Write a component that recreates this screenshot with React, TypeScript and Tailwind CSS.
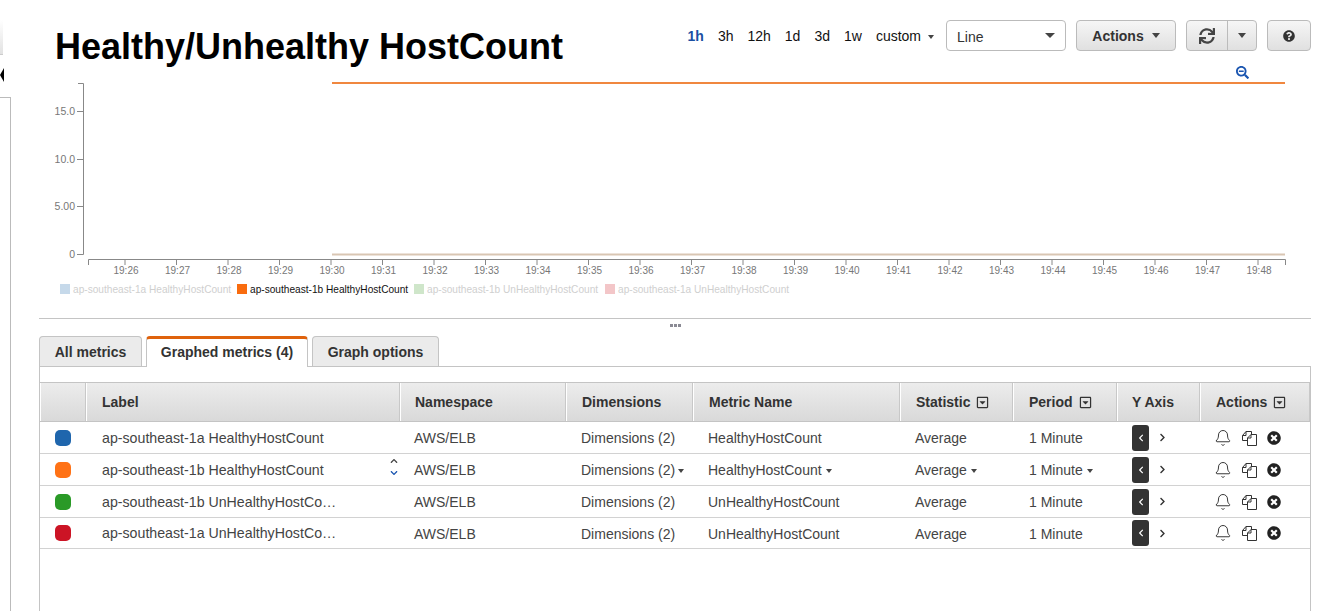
import React from 'react';
import { Bell } from 'lucide-react';
import { FaSync, FaQuestionCircle, FaSearchMinus, FaTimesCircle, FaRegCaretSquareDown, FaChevronLeft, FaChevronRight, FaChevronUp, FaChevronDown } from 'react-icons/fa';

const ranges = ['3h', '12h', '1d', '3d', '1w'];
const minutes = Array.from({ length: 23 }, (_, i) => 26 + i);
const yTicks = [
  { label: '15.0', y: 111 },
  { label: '10.0', y: 159 },
  { label: '5.00', y: 206 },
  { label: '0', y: 254 },
];
const legend = [
  { x: 60, color: '#c6d9ea', text: 'ap-southeast-1a HealthyHostCount', fill: '#cfcfcf' },
  { x: 237, color: '#f96c0f', text: 'ap-southeast-1b HealthyHostCount', fill: '#111111' },
  { x: 414, color: '#cfe6ca', text: 'ap-southeast-1b UnHealthyHostCount', fill: '#cfcfcf' },
  { x: 605, color: '#f3c6c8', text: 'ap-southeast-1a UnHealthyHostCount', fill: '#cfcfcf' },
];
const rows = [
  { color: 'bg-[#1f66ad]', label: 'ap-southeast-1a HealthyHostCount', metric: 'HealthyHostCount', h: 'h-[32px]' },
  { color: 'bg-[#ff7216]', label: 'ap-southeast-1b HealthyHostCount', metric: 'HealthyHostCount', h: 'h-[32px]', active: true },
  { color: 'bg-[#2a9a27]', label: 'ap-southeast-1b UnHealthyHostCo…', metric: 'UnHealthyHostCount', h: 'h-[32px]' },
  { color: 'bg-[#cc1425]', label: 'ap-southeast-1a UnHealthyHostCo…', metric: 'UnHealthyHostCount', h: 'h-[31px]' },
];
const gridCols = 'grid grid-cols-[46px_314px_166px_127px_207px_113px_104px_83px_1fr]';

const Caret: React.FC<{ className?: string }> = ({ className = '' }) => (
  <span className={`inline-block w-0 h-0 border-x-[3.5px] border-x-transparent border-t-[4px] border-t-[#444] ${className}`} />
);

const CopyIcon: React.FC = () => (
  <svg width="17" height="16" viewBox="0 0 17 16" fill="none" stroke="#333" strokeWidth="1">
    <path d="M6.5 10.5H1.5V5.5L5 1.5H10.5V4.5" />
    <path d="M5 1.5V5.5H1.5" />
    <path d="M6.5 15.5V8L10 4.5H15.5V15.5Z" fill="#fff" />
    <path d="M10 4.5V8H6.5" />
  </svg>
);

const HeaderCell: React.FC<{ label?: string; menu?: boolean; pad?: string }> = ({ label, menu, pad = 'pl-[15px]' }) => (
  <div className={`flex items-center gap-[6px] border-r border-r-[#c8c8c8] border-l border-l-white ${pad} font-bold text-[#333]`}>
    {label}
    {menu && <FaRegCaretSquareDown className="text-[13px] text-[#333]" />}
  </div>
);

const Chart: React.FC = () => (
  <svg className="block w-[1272px] h-[240px]" viewBox="39 60 1272 240" fontFamily="'Liberation Sans', Arial, sans-serif">
    <path d="M78 83.5H83.5V254.5H77" fill="none" stroke="#888" />
    {yTicks.map((t) => (
      <g key={t.label}>
        <line x1="77" x2="83" y1={t.y + 0.5} y2={t.y + 0.5} stroke="#888" />
        <text x="75" y={t.y + 3.5} textAnchor="end" fontSize="10.5" fill="#777">{t.label}</text>
      </g>
    ))}
    <path d="M88.5 265V259.5H1285.5V265" fill="none" stroke="#888" />
    {minutes.map((m, i) => {
      const x = 125 + i * 51.5;
      return (
        <g key={m}>
          <line x1={x} x2={x} y1="259" y2="265" stroke="#888" />
          <text x={x + 1} y="274" textAnchor="middle" fontSize="10" fill="#777">19:{m}</text>
        </g>
      );
    })}
    <line x1="332" x2="1285" y1="83" y2="83" stroke="#f0873f" strokeWidth="2" />
    <line x1="332" x2="1285" y1="254.5" y2="254.5" stroke="#d9c6b3" strokeWidth="2" />
    {legend.map((l) => (
      <g key={l.x}>
        <rect x={l.x} y="284" width="10" height="10" fill={l.color} />
        <text x={l.x + 13} y="293" fontSize="10.15" fill={l.fill}>{l.text}</text>
      </g>
    ))}
  </svg>
);

const App: React.FC = () => (
  <div className="flex w-[1325px] h-[611px] overflow-hidden bg-white text-[14px] text-[#444] font-['Liberation_Sans',Arial,sans-serif]">
    {/* sidebar edge */}
    <div className="w-[11px] shrink-0 mr-[28px] flex flex-col">
      <div className="mt-[20px] w-[3px] h-[35px] bg-gradient-to-b from-white to-[#e2e2e2] border-b border-[#ccc]" />
      <div className="mt-[13px] h-[14px] w-0 border-y-[7px] border-y-transparent border-r-[4px] border-r-black" />
      <div className="mt-[15px] flex-1 border-t border-r border-[#bbb]" />
    </div>

    <div className="flex-1 flex flex-col mr-[14px] relative">
      {/* title and toolbar */}
      <div className="h-[60px] flex items-start">
        <h1 className="ml-[16px] mt-[25px] text-[36px] leading-[44px] font-bold text-black">Healthy/Unhealthy HostCount</h1>
        <div className="ml-auto mt-[20px] flex items-center h-[31px]">
          <div className="flex items-center gap-[14px] pt-[2px] text-[#111]">
            <span className="font-bold text-[#1a4fa3]">1h</span>
            {ranges.map((r) => <span key={r}>{r}</span>)}
            <span className="flex items-center gap-[6px]">custom <Caret className="ml-[1px] border-t-[#333]" /></span>
          </div>
          <div className="ml-[12px] w-[120px] h-[31px] border border-[#bbb] rounded-[4px] flex items-center justify-between pl-[10px] pr-[10px] text-[#333]">
            <span className="pt-[3px]">Line</span> <Caret className="border-x-[5px] border-t-[5px] border-t-[#333]" />
          </div>
          <button className="ml-[10px] w-[100px] h-[31px] border border-[#bbb] rounded-[4px] bg-gradient-to-b from-[#f6f6f6] to-[#e0e0e0] font-bold text-[#333] flex items-center justify-center gap-[8px]">
            <span className="pt-[1px]">Actions</span> <Caret className="border-x-[4px] border-t-[5px]" />
          </button>
          <div className="ml-[10px] w-[71px] h-[31px] border border-[#bbb] rounded-[4px] bg-gradient-to-b from-[#f6f6f6] to-[#e0e0e0] flex">
            <div className="w-[41px] border-r border-[#bbb] flex items-center justify-center"><FaSync className="text-[16px] text-[#444]" /></div>
            <div className="flex-1 flex items-center justify-center"><Caret className="border-x-[4px] border-t-[5px]" /></div>
          </div>
          <button className="ml-[10px] w-[44px] h-[31px] border border-[#bbb] rounded-[4px] bg-gradient-to-b from-[#f6f6f6] to-[#e0e0e0] flex items-center justify-center">
            <FaQuestionCircle className="text-[12px] text-[#333]" />
          </button>
        </div>
      </div>

      <Chart />
      <FaSearchMinus className="absolute left-[1197px] top-[66px] text-[13px] text-[#1a55b0]" />

      {/* splitter */}
      <div className="mt-[18px] h-[18px] border-t border-[#c4c4c4] flex justify-center gap-px pt-[5px]">
        <div className="w-[3px] h-[3px] bg-[#8a8a94]" />
        <div className="w-[3px] h-[3px] bg-[#8a8a94]" />
        <div className="w-[3px] h-[3px] bg-[#8a8a94]" />
      </div>

      {/* tabs */}
      <div className="flex h-[30px] font-bold text-[#333] relative z-10">
        <div className="w-[103px] h-[30px] border border-b-0 border-[#c4c4c4] rounded-t-[4px] bg-[#ebebeb] pt-[1px] flex items-center justify-center">All metrics</div>
        <div className="ml-[4px] w-[162px] h-[31px] border-x border-[#c4c4c4] border-t-[3px] border-t-[#df620c] rounded-t-[4px] bg-white pb-[2px] flex items-center justify-center">Graphed metrics (4)</div>
        <div className="ml-[4px] w-[127px] h-[30px] border border-b-0 border-[#c4c4c4] rounded-t-[4px] bg-[#ebebeb] pt-[1px] flex items-center justify-center">Graph options</div>
      </div>

      {/* graphed metrics */}
      <div className="flex-1 -mb-[4px] border border-[#c4c4c4] pt-[15px]">
        <div className={`${gridCols} h-[40px] bg-gradient-to-b from-[#ececec] to-[#d9d9d9] border-y border-[#c4c4c4]`}>
          <HeaderCell />
          <HeaderCell label="Label" />
          <HeaderCell label="Namespace" pad="pl-[14px]" />
          <HeaderCell label="Dimensions" />
          <HeaderCell label="Metric Name" />
          <HeaderCell label="Statistic" menu />
          <HeaderCell label="Period" menu />
          <HeaderCell label="Y Axis" pad="pl-[14px]" />
          <HeaderCell label="Actions" menu />
        </div>
        {rows.map((row) => (
          <div key={row.label} className={`${gridCols} ${row.h} border-b border-[#d2d2d2] items-center`}>
            <div className="pl-[15px]"><div className={`w-[16px] h-[16px] rounded-[5px] ${row.color}`} /></div>
            <div className="pl-[16px] pt-[2px] relative text-[14.2px]">
              {row.label}
              {row.active && (
                <div className="absolute left-[304px] top-[-1px] flex flex-col gap-[4px]">
                  <FaChevronUp className="text-[8px] text-[#444]" />
                  <FaChevronDown className="text-[8px] text-[#1a55b0]" />
                </div>
              )}
            </div>
            <div className="pl-[14px] pt-[2px]">AWS/ELB</div>
            <div className="pl-[15px] pt-[2px] flex items-center gap-[3px]">Dimensions (2){row.active && <Caret className="border-x-[3px] border-t-[3px]" />}</div>
            <div className="pl-[15px] pt-[2px] flex items-center gap-[4px]">{row.metric}{row.active && <Caret className="border-x-[3px] border-t-[3px]" />}</div>
            <div className="pl-[15px] pt-[2px] flex items-center gap-[4px]">Average{row.active && <Caret className="border-x-[3px] border-t-[3px]" />}</div>
            <div className="pl-[16px] pt-[2px] flex items-center gap-[4px]">1 Minute{row.active && <Caret className="border-x-[3px] border-t-[3px]" />}</div>
            <div className="pl-[15px] flex items-center">
              <div className="w-[17px] h-[26px] rounded-[3px] bg-[#333] flex items-center justify-center"><FaChevronLeft className="text-[8px] text-white" /></div>
              <FaChevronRight className="ml-[9px] text-[9px] text-[#333]" />
            </div>
            <div className="pl-[14px] flex items-center gap-[9px] text-[#222]">
              <Bell size={18} strokeWidth={1.2} />
              <CopyIcon />
              <FaTimesCircle className="text-[14px]" />
            </div>
          </div>
        ))}
      </div>
    </div>
  </div>
);

export default App;
